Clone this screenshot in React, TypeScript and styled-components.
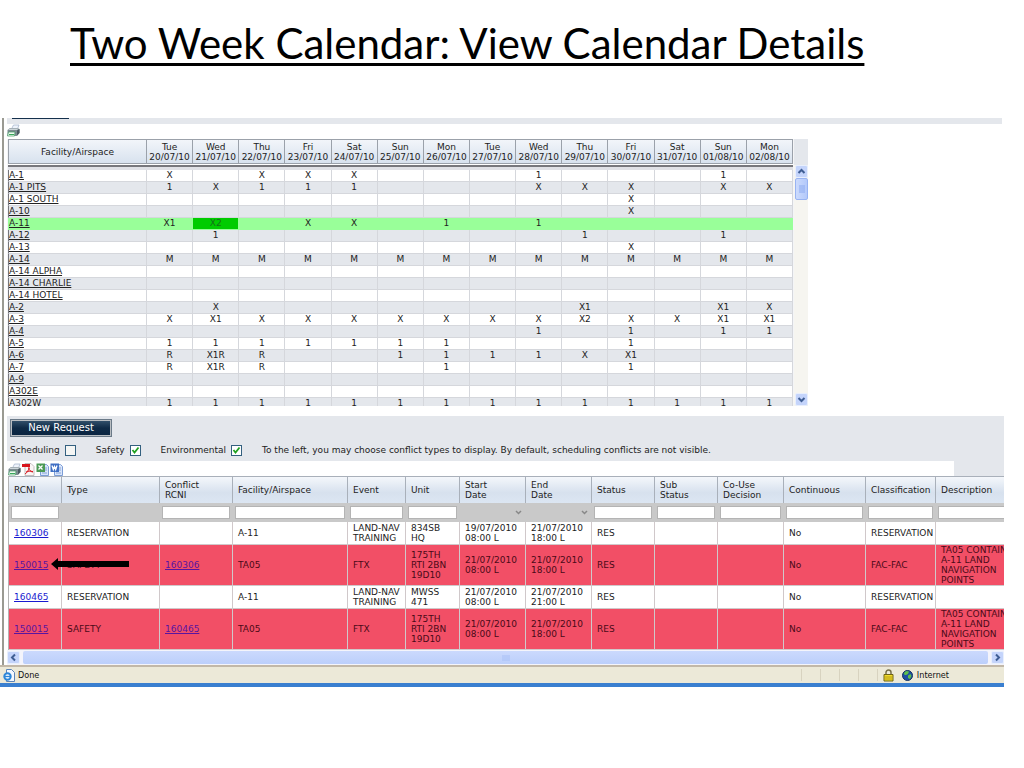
import React from "react";
import styled, { createGlobalStyle, css } from "styled-components";

const GlobalStyle = createGlobalStyle`
  * { box-sizing: border-box; }
  body { margin: 0; background: #fff; color: #222; font: 9px/10px "DejaVu Sans", Verdana, sans-serif; }
  table { border-collapse: separate; border-spacing: 0; table-layout: fixed; }
`;

const Title = styled.h1`
  margin: 0;
  height: 118px;
  padding: 18px 0 0 70px;
  font: 400 42px/50px Lato, sans-serif;
  color: #000;
  white-space: nowrap;
  text-decoration: underline;
  text-decoration-thickness: 3px;
  text-underline-offset: 4px;
`;

const Browser = styled.main`
  margin-right: 20px;
  overflow: hidden;
`;

const Page = styled.div`
  margin-left: 2px;
  border-left: 2px solid #9a9a92;
  padding-left: 3px;
`;

const TopStrip = styled.div`
  height: 6px;
  margin-right: 2px;
  padding-left: 5px;
  background: #e4e7ec;
  &::before {
    content: "";
    display: block;
    width: 57px;
    height: 1px;
    background: #14304c;
  }
`;

const IconButton = styled.button`
  display: block;
  padding: 0;
  border: 0;
  background: none;
  svg { display: block; }
`;

const PrintBar = styled.div`
  height: 15px;
  padding: 0;
`;

const CalendarFrame = styled.section`
  display: grid;
  grid-template-columns: minmax(0, 1fr) 14px;
  grid-template-rows: 267px;
  width: 100%;
  max-width: 801px;
  overflow: hidden;
`;

const CalendarTable = styled.table`
  width: 100%;
  padding-left: 1px;
  padding-right: 1px;
  background: #f4f5f7;
`;

const FacilityCol = styled.col`
  width: 139px;
`;

const DayHead = styled.th`
  height: 25px;
  padding: 0;
  border: solid #9ba1aa;
  border-width: 1px 1px 1px 0;
  &:first-child { border-left-width: 1px; }
  background: linear-gradient(#f2f5fa, #d8e2ee);
  font-weight: 400;
  white-space: nowrap;
`;

const Gap = styled.td`
  height: 6px;
  padding: 0;
  border-top: 1px solid #fff;
  background: linear-gradient(#77777c 0 2px, #e0e1e6 2px);
`;

const DayRow = styled.tr<{ $striped?: boolean; $active?: boolean }>`
  background: ${(p) => (p.$active ? "#99ff99" : p.$striped ? "#e4e7ec" : "#fff")};
  ${(p) => p.$active && css`td, th { border-color: #99ff99; }`}
`;

const dayCell = css`
  height: 12px;
  padding: 0;
  border: solid #d5d7dc;
  border-width: 0 1px 1px 0;
  font-weight: 400;
  line-height: 11px;
  white-space: nowrap;
`;

const FacilityCell = styled.th`
  ${dayCell}
  border-left: 1px solid #77777c;
  text-align: left;
  a { color: #222; text-underline-offset: 1px; }
`;

const DayCell = styled.td<{ $picked?: boolean }>`
  ${dayCell}
  text-align: center;
  ${(p) => p.$picked && css`background: #00cc00; color: #15701a;`}
`;

const VerticalBar = styled.div`
  display: flex;
  flex-direction: column;
  background: #f6f5f0;
`;

const BarCorner = styled.div`
  height: 26px;
  background: #e4e7ec;
`;

const Arrow = styled.button`
  display: grid;
  place-items: center;
  flex: none;
  width: 13px;
  height: 13px;
  padding: 0;
  border: 1px solid #e8effd;
  border-radius: 2px;
  background: #c4d4fb;
  svg { display: block; }
  ${VerticalBar} & { align-self: flex-end; }
`;

const VerticalThumb = styled.div`
  display: grid;
  place-items: center;
  align-self: flex-end;
  width: 13px;
  height: 22px;
  border: 1px solid #98b3f2;
  border-radius: 2px;
  background: linear-gradient(90deg, #cbdafd, #b4c9fa);
`;

const Spacer = styled.div`
  flex: 1;
`;

const Controls = styled.section`
  height: 45px;
  margin-top: 10px;
  padding: 3px 0 0 3px;
  background: #e4e7ec;
`;

const NewRequest = styled.button`
  display: block;
  width: 102px;
  height: 18px;
  padding: 0;
  border: 1px solid #6b7a88;
  outline: 1px solid #b9bec2;
  outline-offset: -2px;
  background: linear-gradient(#35546f, #0e2a46 50%, #0a2440);
  color: #fff;
  font: 10px/14px "DejaVu Sans", Verdana, sans-serif;
`;

const Options = styled.div`
  display: flex;
  align-items: center;
  gap: 20px;
  height: 12px;
  margin-top: 7px;
  white-space: nowrap;
`;

const Option = styled.label`
  display: flex;
  align-items: center;
  gap: 5px;
`;

const Tick = styled.input`
  appearance: none;
  width: 11px;
  height: 11px;
  margin: 0;
  border: 1px solid #33607f;
  background: #f5f6f4;
  &:checked {
    background: #fff url("data:image/svg+xml,%3Csvg xmlns='http://www.w3.org/2000/svg' viewBox='0 0 9 9'%3E%3Cpath d='M1.5 4l2 2.500 4-5' fill='none' stroke='%2321a121' stroke-width='1.800'/%3E%3C/svg%3E");
  }
`;

const ExportBar = styled.div`
  display: flex;
  gap: 1px;
  height: 15px;
  padding: 1px 0 0 1px;
  border-right: 50px solid #e4e7ec;
`;

const RequestScroll = styled.section`
  margin-left: 1px;
  overflow: hidden;
`;

const RequestTable = styled.table`
  width: 100%;
  min-width: 1028px;
  border-left: 1px solid #b4b4b4;
`;

const SizedCol = styled.col<{ $w?: number }>`
  width: ${(p) => (p.$w ? `${p.$w}px` : "auto")};
`;

const ColumnHead = styled.th`
  height: 27px;
  padding: 0 0 0 5px;
  border: solid #a9b0ba;
  border-width: 1px 1px 0 0;
  background: linear-gradient(#f4f7fb, #d7e1ee 60%, #dce6f2);
  font-weight: 400;
  text-align: left;
`;

const FilterCell = styled.td`
  height: 19px;
  padding: 0 3px 0 2px;
  background: #c9c9c9;
`;

const FilterInput = styled.input`
  display: block;
  width: 100%;
  height: 13px;
  padding: 0 2px;
  border: 1px solid #b4b4b4;
  background: #fff;
  font: inherit;
`;

const FilterSelect = styled.select`
  display: block;
  appearance: none;
  width: 100%;
  height: 13px;
  padding: 0;
  border: 0;
  background: url("data:image/svg+xml,%3Csvg xmlns='http://www.w3.org/2000/svg' viewBox='0 0 7 5'%3E%3Cpath d='M1 1l2.500 2.500L6 1' fill='none' stroke='%23888' stroke-width='1.500'/%3E%3C/svg%3E") right 1px center / 7px 5px no-repeat;
  font: inherit;
`;

const RequestRow = styled.tr<{ $conflict?: boolean }>`
  height: ${(p) => (p.$conflict ? 41 : 23)}px;
  background: ${(p) => (p.$conflict ? "#f24f66" : "#fff")};
  color: ${(p) => (p.$conflict ? "#4a0a18" : "#222")};
  a { color: ${(p) => (p.$conflict ? "#5a14a0" : "#1a1ad0")}; }
`;

const RequestCell = styled.td`
  position: relative;
  padding: 0 0 0 5px;
  border: solid #d0c8ca;
  border-width: 0 1px 1px 0;
  line-height: 10px;
  white-space: pre;
`;

const Pointer = styled.svg`
  position: absolute;
  z-index: 1;
  left: 42px;
  top: 13px;
`;

const HorizontalBar = styled.div`
  display: flex;
  height: 15px;
  padding-top: 1px;
  background: #f4f4fb;
`;

const HorizontalThumb = styled.div`
  display: grid;
  place-items: center;
  flex: 1;
  height: 13px;
  margin: 0 3px;
  border-radius: 2px;
  background: linear-gradient(#cbd9fd, #bccffb);
`;

const StatusBar = styled.footer`
  display: flex;
  align-items: center;
  gap: 3px;
  height: 22px;
  padding: 0 55px 0 3px;
  border-top: 2px solid #c2b8a8;
  border-bottom: 4px solid #3a7fd0;
  background: #ece9d8;
  color: #111;
  font: 9px/12px "DejaVu Sans Condensed", Tahoma, sans-serif;
`;

const StatusPanes = styled.div`
  display: grid;
  grid-template-columns: repeat(4, 19px) 3px;
  height: 12px;
`;

const StatusPane = styled.span`
  border-left: 1px solid #d8d3c0;
`;

const Zone = styled.span`
  display: flex;
  align-items: center;
  gap: 4px;
  margin-left: 5px;
`;

const PrinterIcon = () => (
  <svg width="13" height="13" viewBox="0 0 13 13" aria-hidden="true">
    <path d="M4.500 5l2-4H12l-1.500 4z" fill="#eef3fb" stroke="#9fb0c8" strokeWidth=".7" />
    <path d="M.5 6l2.500-2h7.500l2 1v4L10 12H.5z" fill="#7d8b92" />
    <path d="M1 6h9l2-1.500H3z" fill="#cdd6da" />
    <path d="M10 6.500l2.500-1.500v4L10 11.500z" fill="#4c5a62" />
    <path d="M1.500 8h6.500l-.5 4H.5z" fill="#f0faf2" stroke="#3f9a60" strokeWidth=".7" />
    <path d="M2 10.500h5" stroke="#37a95a" />
  </svg>
);

const PdfIcon = () => (
  <svg width="13" height="13" viewBox="0 0 13 13" aria-hidden="true">
    <path d="M3 .5h6l3 3v9H3z" fill="#fbf6f6" stroke="#b5aeb0" strokeWidth=".8" />
    <path d="M0 1h8v3H0z" fill="#d8141c" />
    <path d="M7 4c0 3-2 6-4 7M7 5c0 2 2 4 4 4M4 9c2-1 4-1 7-.5" fill="none" stroke="#d8141c" />
  </svg>
);

const SheetIcon = ({ tone, mark }: { tone: string; mark: string }) => (
  <svg width="13" height="13" viewBox="0 0 13 13" aria-hidden="true">
    <path d="M4.500 1.500h6l2 2v9h-8z" fill="#d9e5fa" stroke="#7c9dd6" />
    <path d="M9 5h2M9 7h2M6 10h5" stroke="#86a4d8" />
    <path d="M.5.5h8.500v8.500H.5z" fill={tone} />
    <path d={mark} fill="none" stroke="#fff" strokeWidth="1.300" />
  </svg>
);

const Chevron = ({ d }: { d: string }) => (
  <svg width="9" height="9" viewBox="0 0 9 9" aria-hidden="true">
    <path d={d} fill="none" stroke="#3f5e94" strokeWidth="2" />
  </svg>
);

const days = [
  ["Tue", "20/07/10"], ["Wed", "21/07/10"], ["Thu", "22/07/10"], ["Fri", "23/07/10"],
  ["Sat", "24/07/10"], ["Sun", "25/07/10"], ["Mon", "26/07/10"], ["Tue", "27/07/10"],
  ["Wed", "28/07/10"], ["Thu", "29/07/10"], ["Fri", "30/07/10"], ["Sat", "31/07/10"],
  ["Sun", "01/08/10"], ["Mon", "02/08/10"],
];

const facilities: [string, string][] = [
  ["A-1", "X,,X,X,X,,,,1,,,,1,"],
  ["A-1 PITS", "1,X,1,1,1,,,,X,X,X,,X,X"],
  ["A-1 SOUTH", ",,,,,,,,,,X,,,"],
  ["A-10", ",,,,,,,,,,X,,,"],
  ["A-11", "X1,X2,,X,X,,1,,1,,,,,"],
  ["A-12", ",1,,,,,,,,1,,,1,"],
  ["A-13", ",,,,,,,,,,X,,,"],
  ["A-14", "M,M,M,M,M,M,M,M,M,M,M,M,M,M"],
  ["A-14 ALPHA", ",,,,,,,,,,,,,"],
  ["A-14 CHARLIE", ",,,,,,,,,,,,,"],
  ["A-14 HOTEL", ",,,,,,,,,,,,,"],
  ["A-2", ",X,,,,,,,,X1,,,X1,X"],
  ["A-3", "X,X1,X,X,X,X,X,X,X,X2,X,X,X1,X1"],
  ["A-4", ",,,,,,,,1,,1,,1,1"],
  ["A-5", "1,1,1,1,1,1,1,,,,1,,,"],
  ["A-6", "R,X1R,R,,,1,1,1,1,X,X1,,,"],
  ["A-7", "R,X1R,R,,,,1,,,,1,,,"],
  ["A-9", ",,,,,,,,,,,,,"],
  ["A302E", ",,,,,,,,,,,,,"],
  ["A302W", "1,1,1,1,1,1,1,1,1,1,1,1,1,1"],
];

type Filter = "text" | "select" | "none";

const columns: { name: string; width?: number; filter: Filter }[] = [
  { name: "RCNI", width: 53, filter: "text" },
  { name: "Type", width: 98, filter: "none" },
  { name: "Conflict\nRCNI", width: 73, filter: "text" },
  { name: "Facility/Airspace", width: 115, filter: "text" },
  { name: "Event", width: 58, filter: "text" },
  { name: "Unit", width: 54, filter: "text" },
  { name: "Start\nDate", width: 66, filter: "select" },
  { name: "End\nDate", width: 66, filter: "select" },
  { name: "Status", width: 63, filter: "text" },
  { name: "Sub\nStatus", width: 63, filter: "text" },
  { name: "Co-Use\nDecision", width: 66, filter: "text" },
  { name: "Continuous", width: 82, filter: "text" },
  { name: "Classification", width: 70, filter: "text" },
  { name: "Description", filter: "text" },
];

const note = "TA05 CONTAINS\nA-11 LAND\nNAVIGATION\nPOINTS";

const requests: { conflict?: boolean; pointed?: boolean; cells: string[] }[] = [
  { cells: ["160306", "RESERVATION", "", "A-11", "LAND-NAV\nTRAINING", "834SB\nHQ", "19/07/2010\n08:00 L", "21/07/2010\n18:00 L", "RES", "", "", "No", "RESERVATION", ""] },
  { conflict: true, pointed: true, cells: ["150015", "SAFETY", "160306", "TA05", "FTX", "175TH\nRTI 2BN\n19D10", "21/07/2010\n08:00 L", "21/07/2010\n18:00 L", "RES", "", "", "No", "FAC-FAC", note] },
  { cells: ["160465", "RESERVATION", "", "A-11", "LAND-NAV\nTRAINING", "MWSS\n471", "21/07/2010\n08:00 L", "21/07/2010\n21:00 L", "RES", "", "", "No", "RESERVATION", ""] },
  { conflict: true, cells: ["150015", "SAFETY", "160465", "TA05", "FTX", "175TH\nRTI 2BN\n19D10", "21/07/2010\n08:00 L", "21/07/2010\n18:00 L", "RES", "", "", "No", "FAC-FAC", note] },
];

const HeadText = styled.span`
  white-space: pre;
`;

function Calendar() {
  return (
    <CalendarFrame>
      <CalendarTable>
        <colgroup>
          <FacilityCol />
          {days.map(([, date]) => <col key={date} />)}
        </colgroup>
        <thead>
          <tr>
            <DayHead>Facility/Airspace</DayHead>
            {days.map(([day, date]) => <DayHead key={date}>{day}<br />{date}</DayHead>)}
          </tr>
        </thead>
        <tbody>
          <tr><Gap colSpan={15} /></tr>
          {facilities.map(([name, marks], row) => (
            <DayRow key={name} $striped={row % 2 === 1} $active={name === "A-11"}>
              <FacilityCell scope="row"><a href="#facility">{name}</a></FacilityCell>
              {marks.split(",").map((mark, i) => (
                <DayCell key={i} $picked={mark === "X2" && name === "A-11"}>{mark}</DayCell>
              ))}
            </DayRow>
          ))}
        </tbody>
      </CalendarTable>
      <VerticalBar>
        <BarCorner />
        <Arrow aria-label="Scroll up"><Chevron d="M1.500 6l3-3 3 3" /></Arrow>
        <VerticalThumb>
          <svg width="6" height="8" aria-hidden="true"><path d="M0 1h6M0 3h6M0 5h6M0 7h6" stroke="#8caaf0" /></svg>
        </VerticalThumb>
        <Spacer />
        <Arrow aria-label="Scroll down"><Chevron d="M1.500 3l3 3 3-3" /></Arrow>
      </VerticalBar>
    </CalendarFrame>
  );
}

function Requests() {
  return (
    <RequestScroll>
      <RequestTable>
        <colgroup>{columns.map((c) => <SizedCol key={c.name} $w={c.width} />)}</colgroup>
        <thead>
          <tr>{columns.map((c) => <ColumnHead key={c.name}><HeadText>{c.name}</HeadText></ColumnHead>)}</tr>
        </thead>
        <tbody>
          <tr>
            {columns.map((c) => (
              <FilterCell key={c.name}>
                {c.filter === "text" && <FilterInput aria-label={c.name} />}
                {c.filter === "select" && <FilterSelect aria-label={c.name}><option value="" /></FilterSelect>}
              </FilterCell>
            ))}
          </tr>
          {requests.map((r, n) => (
            <RequestRow key={n} $conflict={r.conflict}>
              {r.cells.map((text, i) => (
                <RequestCell key={i}>
                  {(i === 0 || i === 2) && text ? <a href="#request">{text}</a> : text}
                  {r.pointed && i === 0 && (
                    <Pointer width="78" height="12" viewBox="0 0 78 12" aria-hidden="true">
                      <path d="M0 6l7-6v3h71v6H7v3z" fill="#000" />
                    </Pointer>
                  )}
                </RequestCell>
              ))}
            </RequestRow>
          ))}
        </tbody>
      </RequestTable>
    </RequestScroll>
  );
}

export default function App() {
  return (
    <>
      <GlobalStyle />
      <Title>Two Week Calendar: View Calendar Details</Title>
      <Browser>
        <Page>
          <TopStrip />
          <PrintBar><IconButton aria-label="Print calendar"><PrinterIcon /></IconButton></PrintBar>
          <Calendar />
          <Controls>
            <NewRequest>New Request</NewRequest>
            <Options>
              <Option>Scheduling <Tick type="checkbox" /></Option>
              <Option>Safety <Tick type="checkbox" defaultChecked /></Option>
              <Option>Environmental <Tick type="checkbox" defaultChecked /></Option>
              <span>To the left, you may choose conflict types to display. By default, scheduling conflicts are not visible.</span>
            </Options>
          </Controls>
          <ExportBar>
            <IconButton aria-label="Print"><PrinterIcon /></IconButton>
            <IconButton aria-label="Export PDF"><PdfIcon /></IconButton>
            <IconButton aria-label="Export Excel"><SheetIcon tone="#4c9a55" mark="M2.500 2.500l4 4M6.500 2.500l-4 4" /></IconButton>
            <IconButton aria-label="Export Word"><SheetIcon tone="#3f6fc4" mark="M2 2.500l1.300 4 1.200-3 1.200 3 1.300-4" /></IconButton>
          </ExportBar>
          <Requests />
          <HorizontalBar>
            <Arrow aria-label="Scroll left"><Chevron d="M6 1.500l-3 3 3 3" /></Arrow>
            <HorizontalThumb>
              <svg width="8" height="6" aria-hidden="true"><path d="M1 0v6M3 0v6M5 0v6M7 0v6" stroke="#a9c0f6" /></svg>
            </HorizontalThumb>
            <Arrow aria-label="Scroll right"><Chevron d="M3 1.500l3 3-3 3" /></Arrow>
          </HorizontalBar>
        </Page>
        <StatusBar>
          <svg width="12" height="13" viewBox="0 0 12 13" aria-hidden="true">
            <path d="M3.500.5h5l3 3v9h-8z" fill="#f4f8ff" stroke="#5d84b8" />
            <circle cx="4.500" cy="7.500" r="3.200" fill="#e8f4ff" stroke="#2c86d8" strokeWidth="2" />
            <path d="M2 7.500h5.500" stroke="#2c86d8" strokeWidth="1.200" />
          </svg>
          <span>Done</span>
          <Spacer />
          <StatusPanes>
            <StatusPane /><StatusPane /><StatusPane /><StatusPane /><StatusPane />
          </StatusPanes>
          <svg width="11" height="13" viewBox="0 0 11 13" aria-hidden="true">
            <path d="M3 6V3.500a2.500 2.500 0 0 1 5 0V6" fill="none" stroke="#77704a" strokeWidth="1.500" />
            <path d="M1 5.500h9v6.500H1z" fill="#f2dc2c" stroke="#6f6412" />
            <path d="M2 8h7M2 10h7" stroke="#b49c14" />
          </svg>
          <Zone>
            <svg width="11" height="11" viewBox="0 0 11 11" aria-hidden="true">
              <circle cx="5.500" cy="5.500" r="5" fill="#1d4fa4" stroke="#14315f" />
              <path d="M2 3l2-2 3 .5-1 2.500-2 1-1.500 0zM6 5.500l2.500-1.500 1 2-1.500 3-2-1z" fill="#5fbf4a" />
            </svg>
            <span>Internet</span>
          </Zone>
        </StatusBar>
      </Browser>
    </>
  );
}
